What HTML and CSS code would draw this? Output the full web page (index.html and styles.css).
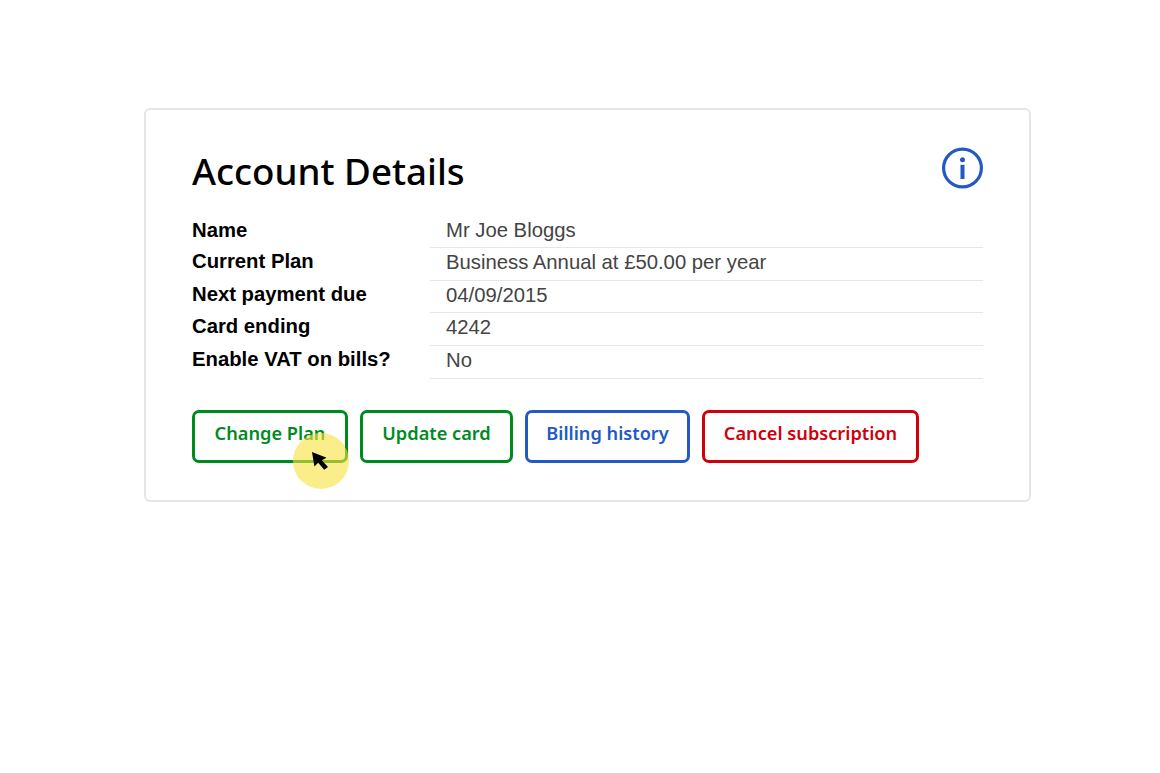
FILE: index.html
```html
<!DOCTYPE html>
<html lang="en">
<head>
<meta charset="utf-8">
<title>Account Details</title>
<link rel="stylesheet" href="styles.css">
</head>
<body>
<main class="card">
  <header class="card-head">
    <h1 class="title">Account Details</h1>
    <svg class="info" viewBox="0 0 42 42" width="42" height="42" aria-hidden="true">
      <circle cx="21.5" cy="21" r="18.9" fill="none" stroke="#2359c4" stroke-width="3.2"/>
      <circle cx="21.5" cy="12.8" r="2.5" fill="#2359c4"/>
      <rect x="19.5" y="17.8" width="4" height="14.2" fill="#2359c4"/>
    </svg>
  </header>
  <dl class="details">
    <div class="row"><dt class="label">Name</dt><dd class="value">Mr Joe Bloggs</dd></div>
    <div class="row"><dt class="label">Current Plan</dt><dd class="value">Business Annual at £50.00 per year</dd></div>
    <div class="row"><dt class="label">Next payment due</dt><dd class="value">04/09/2015</dd></div>
    <div class="row"><dt class="label">Card ending</dt><dd class="value">4242</dd></div>
    <div class="row"><dt class="label">Enable VAT on bills?</dt><dd class="value">No</dd></div>
  </dl>
  <div class="actions">
    <a class="btn btn-green btn-plan">Change Plan</a>
    <a class="btn btn-green btn-card">Update card</a>
    <a class="btn btn-blue btn-history">Billing history</a>
    <a class="btn btn-red btn-cancel">Cancel subscription</a>
    <div class="pointer">
      <svg class="arrow" viewBox="0 0 20 20" width="20" height="20" aria-hidden="true">
        <path d="M1 1 L3.4 15.4 L7.2 11.8 L13.2 18.8 L17 16 L10.8 9.2 L15.6 6.8 Z" fill="#000"/>
      </svg>
    </div>
  </div>
</main>
</body>
</html>
```
FILE: styles.css
```css
* { box-sizing: border-box; }
html, body { margin: 0; height: 100%; background: #fff; }
body { padding: 108px 129px 0 144px; font-family: "Liberation Sans", Arial, sans-serif; }

.card {
  width: 887px;
  height: 394px;
  border: 2px solid #e6e6e6;
  border-radius: 6px;
  padding: 37px 46px 0;
}
.card-head { display: flex; justify-content: space-between; align-items: flex-start; }
.title {
  margin: 0;
  font: 500 36.7px/48px "Noto Sans", sans-serif;
  color: #000;
}
.info { display: block; }

.details { margin: 20px 0 0; }
.row { display: grid; grid-template-columns: 238px 1fr; height: 32.75px; }
.label { font-weight: 700; font-size: 20.3px; line-height: 26px; color: #000; }
.value {
  margin: 0;
  font-size: 20.3px;
  line-height: 28px;
  padding-left: 16px;
  color: #444;
  border-bottom: 1px solid #e6e6e6;
}
.row:first-child .label,
.row:first-child .value { line-height: 30px; }

.actions { position: relative; display: flex; gap: 12px; margin-top: 31px; }
.btn {
  display: block;
  height: 53px;
  border: 3px solid;
  border-radius: 7px;
  font: 600 18.2px/40px "Noto Sans", sans-serif;
  text-align: center;
}
.btn-green { color: #008a1e; }
.btn-blue { color: #2359c4; }
.btn-red { color: #d0000b; }
.btn-plan { width: 156px; }
.btn-card { width: 153px; }
.btn-history { width: 165px; }
.btn-cancel { width: 217px; }

.pointer {
  position: absolute;
  left: 101px;
  top: 23px;
  width: 56px;
  height: 56px;
  border-radius: 50%;
  background: rgba(248, 227, 60, 0.6);
}
.arrow { position: absolute; left: 18px; top: 18px; }
```
